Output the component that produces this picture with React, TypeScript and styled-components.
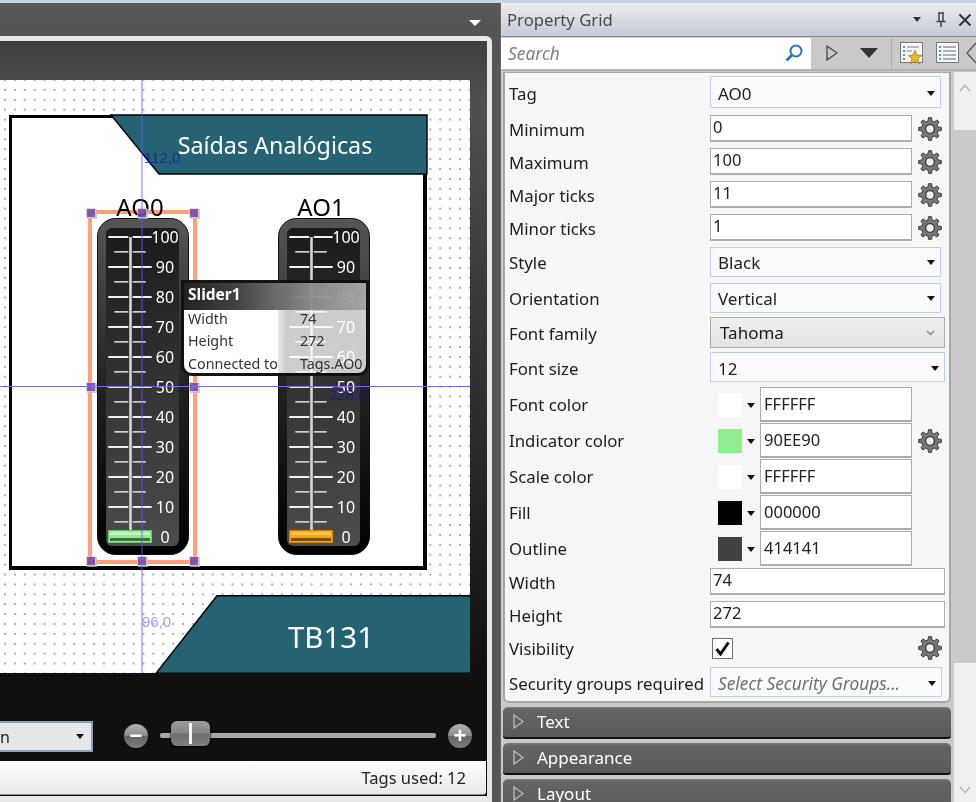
import React from "react";
import styled, { createGlobalStyle } from "styled-components";

const UI = `"Noto Sans", "Open Sans", sans-serif`;
const TAHOMA = `"Noto Sans", "DejaVu Sans", sans-serif`;

const Global = createGlobalStyle`
  html, body { margin: 0; padding: 0; background: #555; }
  * { box-sizing: border-box; }
  #root { width: 976px; height: 802px; overflow: hidden; }
`;

const Page = styled.div`
  width: 976px; height: 802px; display: flex; flex-direction: column; overflow: hidden;
  font-family: ${UI}; background: #555;
`;
const TopStrip = styled.div`height: 3px; flex: none; background: #c6d3e3;`;
const Columns = styled.div`flex: 1; display: flex; min-height: 0;`;

/* Left */
const LeftPane = styled.div`
  width: 500px; flex: none; display: flex; flex-direction: column; background: #565656;
`;
const LeftHead = styled.div`
  height: 33px; flex: none; display: flex; justify-content: flex-end; align-items: flex-end;
  padding: 0 19px 10px 0;
  background: linear-gradient(#585858, #545454);
`;
const HeadCaret = styled.div`
  width: 0; height: 0; border-left: 6px solid transparent; border-right: 6px solid transparent; border-top: 6px solid #fff;
`;
const DocFrame = styled.div`
  width: 492px; flex: 1; display: flex; flex-direction: column; min-height: 0;
  border: solid #e6e8ea; border-width: 5px 5px 6px 0; border-top-right-radius: 6px;
  background: linear-gradient(#3e3e3e 0, #4f4f4f 60px, #101010 640px);
`;
const DocHead = styled.div`height: 39px; flex: none;`;
const Canvas = styled.div`
  position: relative; width: 470px; height: 593px; flex: none; overflow: hidden;
  background-color: #fff;
  background-image: radial-gradient(circle at 1px 1px, rgba(105,105,215,.8) .55px, transparent 1.1px);
  background-size: 9.9px 9.9px;
  background-position: 4px -1px;
`;
const Sheet = styled.div`
  position: absolute; left: 9px; top: 35px; width: 418px; height: 455px;
  background: #fff; border: solid #000; border-width: 3px 4px 4px 3px;
`;
const Banner = styled.div<{ $x: number; $y: number; $w: number; $h: number; $size: number; $pad: number; $top?: number }>`
  position: absolute; left: ${p => p.$x}px; top: ${p => p.$y}px; width: ${p => p.$w}px; height: ${p => p.$h}px;
  display: flex; align-items: center; justify-content: center; padding-left: ${p => p.$pad}px; padding-top: ${p => p.$top ?? 0}px;
  color: #fff; font-family: ${TAHOMA}; font-size: ${p => p.$size}px; white-space: nowrap;
  svg { position: absolute; inset: 0; z-index: 0; }
  span { position: relative; z-index: 1; }
`;
const GaugeTitle = styled.div<{ $x: number }>`
  position: absolute; left: ${p => p.$x}px; top: 112px; width: 92px; text-align: center;
  font-family: ${TAHOMA}; font-size: 24px; line-height: 30px; color: #000;
`;
const GaugeBox = styled.div<{ $x: number }>`
  position: absolute; left: ${p => p.$x}px; top: 138px; width: 92px; height: 337px;
  svg { display: block; }
`;
const SelectionBox = styled.div`
  position: absolute; left: 88px; top: 130px; width: 109px; height: 354px; border: 4px solid #ffa07a; mix-blend-mode: multiply;
`;
const Handle = styled.div<{ $x: number; $y: number }>`
  position: absolute; left: ${p => p.$x}px; top: ${p => p.$y}px; width: 8px; height: 8px;
  background: rgba(118,68,170,.86); outline: 1px solid rgba(205,205,205,.75); box-shadow: 1px 1px 0 1px rgba(190,190,190,.8);
`;
const GuideV = styled.div`
  position: absolute; left: 141px; top: 0; width: 2px; height: 593px; background: rgba(90,90,245,.42);
`;
const GuideH = styled.div`
  position: absolute; left: 0; top: 306px; width: 470px; height: 1px; background: #7272f0;
`;
const GuideLabel = styled.div<{ $x: number; $y: number; $c: string }>`
  position: absolute; left: ${p => p.$x}px; top: ${p => p.$y}px; color: ${p => p.$c};
  font-family: "Liberation Sans", sans-serif; font-size: 15px; line-height: 18px;
`;
const Tip = styled.div`
  position: absolute; left: 181px; top: 200px; width: 188px; height: 96px; overflow: hidden;
  border: 3px solid rgba(0,0,0,.92); border-radius: 0 0 11px 11px;
  background: linear-gradient(90deg, #fff 0, #fff 48%, rgba(255,255,255,.76) 56%, rgba(255,255,255,.76) 100%);
  color: #333; font-size: 14.3px;
`;
const TipHead = styled.div`
  height: 27px; padding: 0 0 5px 4px; display: flex; align-items: center;
  background: linear-gradient(90deg, #222 0, #444 30%, rgba(125,125,125,.85) 70%, rgba(150,150,150,.75) 100%);
  color: #fff; font-weight: 700; font-size: 15.5px;
`;
const TipBody = styled.div`margin-top: -3px;`;
const TipRow = styled.div`
  height: 22.5px; display: grid; grid-template-columns: 112px 1fr; padding-left: 4px; align-items: center; white-space: nowrap;
`;
const Footer = styled.div`
  height: 88px; flex: none; display: flex; align-items: flex-start; padding-top: 48px;
`;
const ZoomSelect = styled.div`
  width: 93px; height: 31px; flex: none; display: flex; align-items: center; justify-content: space-between;
  background: #e4e6ea; border: 2px solid #8aa3bf; border-left: 0; padding: 0 7px 0 0;
  font-size: 16px; color: #222; line-height: 1;
`;
const SmallCaret = styled.div<{ $c?: string }>`
  width: 0; height: 0; border-left: 4px solid transparent; border-right: 4px solid transparent; border-top: 5px solid ${p => p.$c ?? "#111"};
`;
const ZoomBtn = styled.div<{ $ml?: number }>`
  width: 24px; height: 24px; flex: none; border-radius: 50%; margin: 3px 0 0 ${p => p.$ml ?? 0}px; display: flex; align-items: center; justify-content: center;
  background: linear-gradient(#b5b5b5, #8a8a8a 48%, #666 52%, #7c7c7c);
  color: #fff; font: 700 22px/24px "Liberation Sans", sans-serif;
`;
const ZoomTrack = styled.div`
  position: relative; width: 276px; height: 5px; flex: none; margin: 12px 12px 0; border-radius: 2px; background: #a8a8a8;
`;
const ZoomThumb = styled.div`
  position: absolute; left: 11px; top: -12px; width: 39px; height: 25px; border-radius: 6px;
  background: linear-gradient(#9c9c9c, #858585 48%, #6e6e6e 52%, #808080);
  box-shadow: 0 1px 3px #000;
  &::after { content: ""; position: absolute; left: 18px; top: 2px; width: 3px; height: 21px; background: #f4f4f4; }
`;
const Status = styled.div`
  width: 486px; height: 34px; flex: none; display: flex; align-items: center; justify-content: flex-end; padding-right: 20px;
  background: linear-gradient(#fdfdfd, #e9e9e9); border-bottom: 1px solid #888; border-radius: 0 0 3px 0;
  font-size: 16.5px; color: #222;
`;

/* Right */
const RightPane = styled.div`
  width: 476px; flex: none; display: flex; flex-direction: column; background: #c9c9c9; border-left: 1px solid #666; overflow: hidden;
`;
const TitleBar = styled.div`
  height: 34px; flex: none; display: flex; align-items: center; padding: 0 4px 0 6px; color: #4a4a4a; font-size: 16.7px;
  background: linear-gradient(#eceef1, #c4c9d6); border-bottom: 1px solid #8b8b8b;
`;
const TitleText = styled.div`flex: 1;`;
const TitleIcons = styled.div`display: flex; align-items: center; gap: 10px;`;
const TitleCaret = styled.div`margin-right: 3px; display: flex;`;
const Toolbar = styled.div`
  height: 34px; flex: none; display: flex; align-items: center; background: #c9c9c9; border-bottom: 2px solid #b2b2b2;
`;
const SearchBox = styled.div`
  width: 310px; height: 31px; flex: none; display: flex; align-items: center; justify-content: space-between;
  background: #fff; padding: 0 7px 0 7px; color: #808080; font-style: italic; font-size: 17.4px;
`;
const ToolIcon = styled.div<{ $w: number; $end?: boolean }>`
  width: ${p => p.$w}px; flex: none; display: flex; align-items: center; justify-content: ${p => p.$end ? "flex-end" : "center"};
`;
const ToolSep = styled.div`width: 1px; height: 31px; background: #a8a8a8; margin: 0 8px 0 6px; flex: none;`;
const BackArrow = styled.div`margin-left: 6px; display: flex;`;
const Main = styled.div`flex: 1; display: flex; min-height: 0;`;
const PanelCol = styled.div`width: 453px; flex: none; padding: 1px 0 0 2px; display: flex; flex-direction: column; background: #c9c9c9;`;
const PropPanel = styled.div`
  width: 448px; height: 631px; flex: none; margin-bottom: 4px; padding: 3px 0 0 4px;
  background: #f6f6f6; border: 2px solid #a8a8a8; border-top-width: 1px; border-radius: 0 0 6px 6px;
`;
const Row = styled.div<{ $h: number; $mt: number }>`
  height: ${p => p.$h}px; margin-top: ${p => p.$mt}px; display: grid; grid-template-columns: 201px 1fr; align-items: center;
`;
const Label = styled.div<{ $pt: number }>`font-size: 16.8px; color: #1c1c1c; padding-top: ${p => p.$pt}px; white-space: nowrap; line-height: 20px;`;
const FieldWrap = styled.div`display: flex; align-items: center; height: 100%;`;
const SelectBox = styled.div<{ $w: number; $italic?: boolean; $pt: number }>`
  width: ${p => p.$w}px; height: 100%; display: flex; align-items: center; justify-content: space-between;
  padding: ${p => p.$pt}px 5px 0 7px; border: 1px solid #bed0e5; background: #fbfbfb; font-size: ${p => p.$italic ? 17.3 : 17}px; color: ${p => p.$italic ? "#707070" : "#222"};
  font-style: ${p => p.$italic ? "italic" : "normal"};
  line-height: 22px;
`;
const FontSelect = styled.div`
  width: 235px; height: 100%; display: flex; align-items: center; justify-content: space-between; padding: 0 9px 0 9px;
  border: 1px solid #aaa; background: linear-gradient(#f0f0f0, #e2e2e2); font-size: 17px; color: #1a1a1a;
`;
const TextField = styled.div<{ $w: number }>`
  width: ${p => p.$w}px; height: 100%; flex: none; border: 1px solid #adadad; background: #fff; font-size: 16.5px; color: #222;
  padding: 0 0 0 2px; line-height: 22px; border-width: 1px 1px 2px 1px;
`;
const ColorField = styled(TextField)`line-height: 32px; padding-left: 3px;`;
const Swatch = styled.div<{ $c: string }>`width: 24px; height: 24px; flex: none; margin-left: 8px; background: ${p => p.$c};`;
const SwatchCaret = styled.div`display: flex; width: 18px; justify-content: center; flex: none; padding-top: 2px;`;
const GearSlot = styled.div<{ $mr?: number }>`width: 24px; height: 24px; flex: none; margin: 0 ${p => p.$mr ?? 0}px 0 6px;`;
const CheckBox = styled.div`
  width: 21px; height: 21px; flex: none; margin-left: 2px; border: 1px solid #707070; background: #fff; display: flex; align-items: center; justify-content: center;
`;
const Spacer = styled.div`flex: 1;`;
const Accordion = styled.div`
  height: 32px; flex: none; margin-bottom: 4px; width: 448px; display: flex; align-items: center; gap: 13px; padding: 0 0 2px 10px;
  background: linear-gradient(#7c7c7c 0, #646464 3px, #5a5a5a 100%); border-bottom: 2px solid #111; border-radius: 5px 5px 3px 3px;
  color: #fff; font-size: 17px;
`;
const ScrollBar = styled.div`
  width: 22px; flex: none; display: flex; flex-direction: column; background: #f0f0f0; margin-top: 1px;
`;
const ScrollBtn = styled.div<{ $h: number; $mb?: number }>`
  height: ${p => p.$h}px; margin-bottom: ${p => p.$mb ?? 0}px; flex: none; display: flex; align-items: center; justify-content: center;
`;
const ScrollThumb = styled.div`height: 533px; flex: none; background: #c9c9c9;`;

const gearPoints = (() => {
  const pts: string[] = [];
  const n = 8;
  for (let i = 0; i < n; i++) {
    const a = (i / n) * Math.PI * 2;
    const d = Math.PI / n;
    const P = (r: number, t: number) => `${(12 + r * Math.cos(t)).toFixed(2)},${(12 + r * Math.sin(t)).toFixed(2)}`;
    pts.push(P(8.3, a - d * 0.62), P(11.4, a - d * 0.34), P(11.4, a + d * 0.34), P(8.3, a + d * 0.62));
  }
  return pts.join(" ");
})();

const Gear = () => (
  <svg width="24" height="24" viewBox="0 0 24 24">
    <polygon points={gearPoints} fill="#777" stroke="#3c3c3c" strokeWidth="1" strokeLinejoin="round" />
    <circle cx="12" cy="12" r="4.4" fill="#efefef" stroke="#3a3a3a" strokeWidth="1.4" />
  </svg>
);

const Gauge = ({ id, color, edge, hi, low }: { id: string; color: string; edge: string; hi: string; low: string }) => {
  const labels = [100, 90, 80, 70, 60, 50, 40, 30, 20, 10, 0];
  return (
    <svg width="92" height="337" viewBox="0 0 92 337">
      <defs>
        <linearGradient id={`o${id}`} x1="0" y1="0" x2="0" y2="1">
          <stop offset="0" stopColor="#565656" />
          <stop offset=".5" stopColor="#222" />
          <stop offset="1" stopColor="#000" />
        </linearGradient>
        <linearGradient id={`i${id}`} x1="0" y1="0" x2="0" y2="1">
          <stop offset="0" stopColor="#1b1b1b" />
          <stop offset="1" stopColor="#4c4c4c" />
        </linearGradient>
      </defs>
      <rect x=".5" y=".5" width="91" height="336" rx="18" fill={`url(#o${id})`} stroke="#111" />
      <rect x="9" y="10" width="73" height="318" rx="6" fill={`url(#i${id})`} />
      {labels.map((l, i) => {
        const y = 19 + i * 30;
        return (
          <g key={l}>
            {l !== 0 && <rect x="11.3" y={y - 1} width="20" height="2" fill="#f0f0f0" />}
            {l !== 0 && <rect x="35.7" y={y - 1} width="19" height="2" fill="#f0f0f0" />}
            {l !== 0 && <rect x="17.3" y={y + 14} width="14" height="1.7" fill="#cdcdcd" />}
            {l !== 0 && <rect x="35.7" y={y + 14} width="13" height="1.7" fill="#cdcdcd" />}
            <text x="68" y={y + 6} textAnchor="middle" fontSize="16" fill="#fff" fontFamily={TAHOMA}>{l}</text>
          </g>
        );
      })}
      <rect x="32.2" y="19" width="2.6" height="294" fill="#d4d4d4" />
      <rect x="11.5" y="312.5" width="43" height="12" fill={color} stroke={edge} />
      <rect x="13" y="314" width="40" height="3" fill={hi} />
      <rect x="13" y="320" width="40" height="3" fill={low} />
    </svg>
  );
};

const Banner1 = () => (
  <svg width="320" height="62" viewBox="0 0 320 62">
    <polygon points="3,1 319,1 319,60 51,60" fill="#256373" stroke="#000" strokeWidth="1.4" />
  </svg>
);
const Banner2 = () => (
  <svg width="316" height="79" viewBox="0 0 316 79">
    <polygon points="62,.7 316,.7 316,78.3 1,78.3" fill="#256373" stroke="#000" strokeWidth="1.4" />
  </svg>
);

const OutlineTri = ({ c = "#444", w = 12, h = 18 }: { c?: string; w?: number; h?: number }) => (
  <svg width={w} height={h} viewBox={`0 0 ${w} ${h}`}>
    <polygon points={`1,1 ${w - 1},${h / 2} 1,${h - 1}`} fill="none" stroke={c} strokeWidth="1.3" />
  </svg>
);
const Chevron = ({ d }: { d: "up" | "down" }) => (
  <svg width="12" height="8" viewBox="0 0 12 8">
    <polyline points={d === "up" ? "1,7 6,1.5 11,7" : "1,1 6,6.5 11,1"} fill="none" stroke="#b8b8b8" strokeWidth="1.6" />
  </svg>
);
const SmallChevron = () => (
  <svg width="9" height="6" viewBox="0 0 9 6">
    <polyline points="1,1 4.5,4.5 8,1" fill="none" stroke="#8a8a8a" strokeWidth="1.4" />
  </svg>
);

type R =
  | { t: "select"; label: string; v: string; w: number; h: number; mt: number; italic?: boolean; pt?: number }
  | { t: "font"; label: string; v: string; h: number; mt: number; pt?: number }
  | { t: "input"; label: string; v: string; w: number; h: number; mt: number; gear?: boolean; pt?: number }
  | { t: "color"; label: string; v: string; c: string; h: number; mt: number; gear?: boolean; pt?: number }
  | { t: "check"; label: string; h: number; mt: number; pt?: number };

const rows: R[] = [
  { t: "select", label: "Tag", v: "AO0", w: 231, h: 32, mt: 0 },
  { t: "input", label: "Minimum", v: "0", w: 202, h: 27, mt: 7, gear: true },
  { t: "input", label: "Maximum", v: "100", w: 202, h: 27, mt: 6, gear: true },
  { t: "input", label: "Major ticks", v: "11", w: 202, h: 27, mt: 6, gear: true },
  { t: "input", label: "Minor ticks", v: "1", w: 202, h: 27, mt: 6, gear: true },
  { t: "select", label: "Style", v: "Black", w: 231, h: 30, mt: 6, pt: 1 },
  { t: "select", label: "Orientation", v: "Vertical", w: 231, h: 30, mt: 6, pt: 1 },
  { t: "font", label: "Font family", v: "Tahoma", h: 31, mt: 4 },
  { t: "select", label: "Font size", v: "12", w: 235, h: 30, mt: 4 },
  { t: "color", label: "Font color", v: "FFFFFF", c: "#ffffff", h: 33, mt: 5, pt: 1 },
  { t: "color", label: "Indicator color", v: "90EE90", c: "#90ee90", h: 33, mt: 3, gear: true, pt: 1 },
  { t: "color", label: "Scale color", v: "FFFFFF", c: "#ffffff", h: 33, mt: 3, pt: 1 },
  { t: "color", label: "Fill", v: "000000", c: "#000000", h: 33, mt: 3, pt: 1 },
  { t: "color", label: "Outline", v: "414141", c: "#414141", h: 33, mt: 3, pt: 1 },
  { t: "input", label: "Width", v: "74", w: 235, h: 27, mt: 4 },
  { t: "input", label: "Height", v: "272", w: 235, h: 27, mt: 6 },
  { t: "check", label: "Visibility", h: 30, mt: 5, pt: 1 },
  { t: "select", label: "Security groups required", v: "Select Security Groups...", w: 232, h: 30, mt: 4, italic: true },
];

const Field = ({ r }: { r: R }) => {
  switch (r.t) {
    case "select":
      return (
        <SelectBox $w={r.w} $italic={r.italic} $pt={r.pt ?? 3}>
          <span>{r.v}</span>
          <SmallCaret />
        </SelectBox>
      );
    case "font":
      return (
        <FontSelect>
          <span>{r.v}</span>
          <SmallChevron />
        </FontSelect>
      );
    case "input":
      return (
        <>
          <TextField $w={r.w}>{r.v}</TextField>
          {r.gear && <GearSlot><Gear /></GearSlot>}
        </>
      );
    case "color":
      return (
        <>
          <Swatch $c={r.c} />
          <SwatchCaret><SmallCaret /></SwatchCaret>
          <ColorField $w={152}>{r.v}</ColorField>
          {r.gear && <GearSlot><Gear /></GearSlot>}
        </>
      );
    case "check":
      return (
        <>
          <CheckBox>
            <svg width="17" height="17" viewBox="0 0 17 17">
              <polyline points="2.5,9 6.5,14 14.5,2.5" fill="none" stroke="#111" strokeWidth="3" />
            </svg>
          </CheckBox>
          <Spacer />
          <GearSlot $mr={7}><Gear /></GearSlot>
        </>
      );
  }
};

const Handles: [number, number][] = [
  [87, 129], [138, 129], [190, 129], [87, 303], [190, 303], [87, 477], [138, 477], [190, 477],
];

export default function App() {
  return (
    <Page>
      <Global />
      <TopStrip />
      <Columns>
        <LeftPane>
          <LeftHead><HeadCaret /></LeftHead>
          <DocFrame>
            <DocHead />
            <Canvas>
              <Sheet />
              <Banner $x={108} $y={34} $w={320} $h={62} $size={23.3} $pad={14}>
                <Banner1 />
                <span>Saídas Analógicas</span>
              </Banner>
              <Banner $x={155} $y={515} $w={316} $h={79} $size={29.5} $pad={36} $top={4}>
                <Banner2 />
                <span>TB131</span>
              </Banner>
              <GaugeTitle $x={94}>AO0</GaugeTitle>
              <GaugeTitle $x={275}>AO1</GaugeTitle>
              <SelectionBox />
              <GaugeBox $x={97}>
                <Gauge id="a" color="#90ee90" edge="#6fc56f" hi="#c0f5c0" low="#3f6f3f" />
              </GaugeBox>
              <GaugeBox $x={278}>
                <Gauge id="b" color="#ffa500" edge="#d08500" hi="#ffc44d" low="#7a5000" />
              </GaugeBox>
              {Handles.map(([x, y]) => <Handle key={`${x}-${y}`} $x={x} $y={y} />)}
              <GuideV />
              <GuideH />
              <GuideLabel $x={144} $y={69} $c="rgba(20,30,150,.85)">112,0</GuideLabel>
              <GuideLabel $x={329} $y={306} $c="rgba(25,25,130,.9)">228,0</GuideLabel>
              <GuideLabel $x={142} $y={533} $c="#a3a3e8">96,0</GuideLabel>
              <Tip>
                <TipHead>Slider1</TipHead>
                <TipBody>
                  <TipRow><span>Width</span><span>74</span></TipRow>
                  <TipRow><span>Height</span><span>272</span></TipRow>
                  <TipRow><span>Connected to</span><span>Tags.AO0</span></TipRow>
                </TipBody>
              </Tip>
            </Canvas>
            <Footer>
              <ZoomSelect><span>n</span><SmallCaret /></ZoomSelect>
              <ZoomBtn $ml={31}>−</ZoomBtn>
              <ZoomTrack><ZoomThumb /></ZoomTrack>
              <ZoomBtn>+</ZoomBtn>
            </Footer>
            <Status>Tags used: 12</Status>
          </DocFrame>
        </LeftPane>
        <RightPane>
          <TitleBar>
            <TitleText>Property Grid</TitleText>
            <TitleIcons>
              <TitleCaret><SmallCaret $c="#333" /></TitleCaret>
              <svg width="14" height="16" viewBox="0 0 14 16">
                <path d="M4 1h6M5 1v8M9 1v8M2.5 9.5h9M7 10v5" fill="none" stroke="#444" strokeWidth="1.5" />
              </svg>
              <svg width="14" height="14" viewBox="0 0 14 14">
                <path d="M1.5 1.5 12.5 12.5M12.5 1.5 1.5 12.5" stroke="#333" strokeWidth="2" />
              </svg>
            </TitleIcons>
          </TitleBar>
          <Toolbar>
            <SearchBox>
              <span>Search</span>
              <svg width="20" height="20" viewBox="0 0 20 20">
                <circle cx="12" cy="8" r="5.5" fill="#f4f9ff" stroke="#2d72b8" strokeWidth="2" />
                <path d="M8 12 2.5 17.5" stroke="#2d72b8" strokeWidth="2.6" />
              </svg>
            </SearchBox>
            <ToolIcon $w={42}><OutlineTri c="#444" w={12} h={16} /></ToolIcon>
            <ToolIcon $w={32}>
              <svg width="18" height="10" viewBox="0 0 18 10"><polygon points="0,0 18,0 9,10" fill="#333" /></svg>
            </ToolIcon>
            <ToolSep />
            <ToolIcon $w={24}>
              <svg width="24" height="24" viewBox="0 0 24 24">
                <rect x=".5" y="1.5" width="22" height="20" fill="#f6f8fb" stroke="#777" />
                <path d="M3 6h2M3 10h2M3 14h2M3 18h2" stroke="#3aa0e8" strokeWidth="2" />
                <path d="M7 6h12M7 10h5" stroke="#9ab" strokeWidth="1.5" />
                <polygon points="15,9 17,14 22,14.5 18,17.5 19.5,23 15,20 10.5,23 12,17.5 8,14.5 13,14" fill="#e8b82c" stroke="#a57c10" strokeWidth=".7" />
              </svg>
            </ToolIcon>
            <ToolIcon $w={36} $end>
              <svg width="24" height="24" viewBox="0 0 24 24">
                <rect x=".5" y="1.5" width="22" height="20" fill="#f6f8fb" stroke="#777" />
                <path d="M3 6h2M3 10h2M3 14h2M3 18h2" stroke="#3aa0e8" strokeWidth="2" />
                <path d="M7 6h13M7 10h13M7 14h13M7 18h13" stroke="#8a97a8" strokeWidth="1.5" />
              </svg>
            </ToolIcon>
            <BackArrow>
              <svg width="10" height="22" viewBox="0 0 10 22">
                <polyline points="10,1 1,11 10,21" fill="none" stroke="#555" strokeWidth="1.3" />
              </svg>
            </BackArrow>
          </Toolbar>
          <Main>
            <PanelCol>
              <PropPanel>
                {rows.map(r => (
                  <Row key={r.label} $h={r.h} $mt={r.mt}>
                    <Label $pt={r.pt ?? 3}>{r.label}</Label>
                    <FieldWrap><Field r={r} /></FieldWrap>
                  </Row>
                ))}
              </PropPanel>
              {["Text", "Appearance", "Layout"].map(t => (
                <Accordion key={t}>
                  <OutlineTri c="#bdbdbd" w={11} h={15} />
                  <span>{t}</span>
                </Accordion>
              ))}
            </PanelCol>
            <ScrollBar>
              <ScrollBtn $h={32} $mb={26}><Chevron d="up" /></ScrollBtn>
              <ScrollThumb />
              <Spacer />
              <ScrollBtn $h={24}><Chevron d="down" /></ScrollBtn>
            </ScrollBar>
          </Main>
        </RightPane>
      </Columns>
    </Page>
  );
}
